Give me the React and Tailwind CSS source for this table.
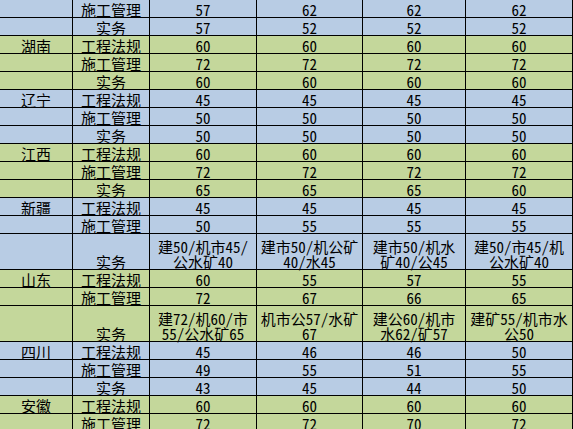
const BLUE = "bg-[#b8cce4]";
const GREEN = "bg-[#c4d79b]";

const groups = [
  {
    name: "",
    bg: BLUE,
    rows: [
      ["施工管理", "57", "62", "62", "62"],
      ["实务", "57", "52", "52", "52"],
    ],
  },
  {
    name: "湖南",
    bg: GREEN,
    rows: [
      ["工程法规", "60", "60", "60", "60"],
      ["施工管理", "72", "72", "72", "72"],
      ["实务", "60", "60", "60", "60"],
    ],
  },
  {
    name: "辽宁",
    bg: BLUE,
    rows: [
      ["工程法规", "45", "45", "45", "45"],
      ["施工管理", "50", "50", "50", "50"],
      ["实务", "50", "50", "50", "50"],
    ],
  },
  {
    name: "江西",
    bg: GREEN,
    rows: [
      ["工程法规", "60", "60", "60", "60"],
      ["施工管理", "72", "72", "72", "72"],
      ["实务", "65", "65", "65", "60"],
    ],
  },
  {
    name: "新疆",
    bg: BLUE,
    rows: [
      ["工程法规", "45", "45", "45", "45"],
      ["施工管理", "50", "55", "55", "55"],
      [
        "实务",
        ["建50/机市45/", "公水矿40"],
        ["建市50/机公矿", "40/水45"],
        ["建市50/机水", "矿40/公45"],
        ["建50/市45/机", "公水矿40"],
      ],
    ],
  },
  {
    name: "山东",
    bg: GREEN,
    rows: [
      ["工程法规", "60", "55", "57", "55"],
      ["施工管理", "72", "67", "66", "65"],
      [
        "实务",
        ["建72/机60/市", "55/公水矿65"],
        ["机市公57/水矿", "67"],
        ["建公60/机市", "水62/矿57"],
        ["建矿55/机市水", "公50"],
      ],
    ],
  },
  {
    name: "四川",
    bg: BLUE,
    rows: [
      ["工程法规", "45", "46", "46", "50"],
      ["施工管理", "49", "55", "51", "55"],
      ["实务", "43", "45", "44", "50"],
    ],
  },
  {
    name: "安徽",
    bg: GREEN,
    rows: [
      ["工程法规", "60", "60", "60", "60"],
      ["施工管理", "72", "72", "70", "72"],
    ],
  },
];

const Cell = ({ children }) => (
  <div className="flex flex-col items-center justify-end border-r border-b border-black leading-[15px] whitespace-nowrap">
    {Array.isArray(children)
      ? children.map((line, i) => <span key={i}>{line}</span>)
      : children}
  </div>
);

const App = () => {
  return (
    <div
      className="w-[573px] overflow-hidden text-[15px] text-black"
      style={{ fontFamily: '"Noto Sans Mono CJK SC", "Noto Sans CJK SC", monospace' }}
    >
      {groups.map((group, g) => (
        <div key={g} className={group.bg}>
          {group.rows.map((row, r) => {
            const tall = row.some((v) => Array.isArray(v));
            return (
              <div
                key={r}
                className={`grid grid-cols-[73px_77px_107px_106px_103px_107px] ${
                  tall ? "h-[36px]" : "h-[18px]"
                }`}
              >
                <Cell>{r === 0 ? group.name : ""}</Cell>
                {row.map((v, i) => (
                  <Cell key={i}>{v}</Cell>
                ))}
              </div>
            );
          })}
        </div>
      ))}
    </div>
  );
};

export default App;
